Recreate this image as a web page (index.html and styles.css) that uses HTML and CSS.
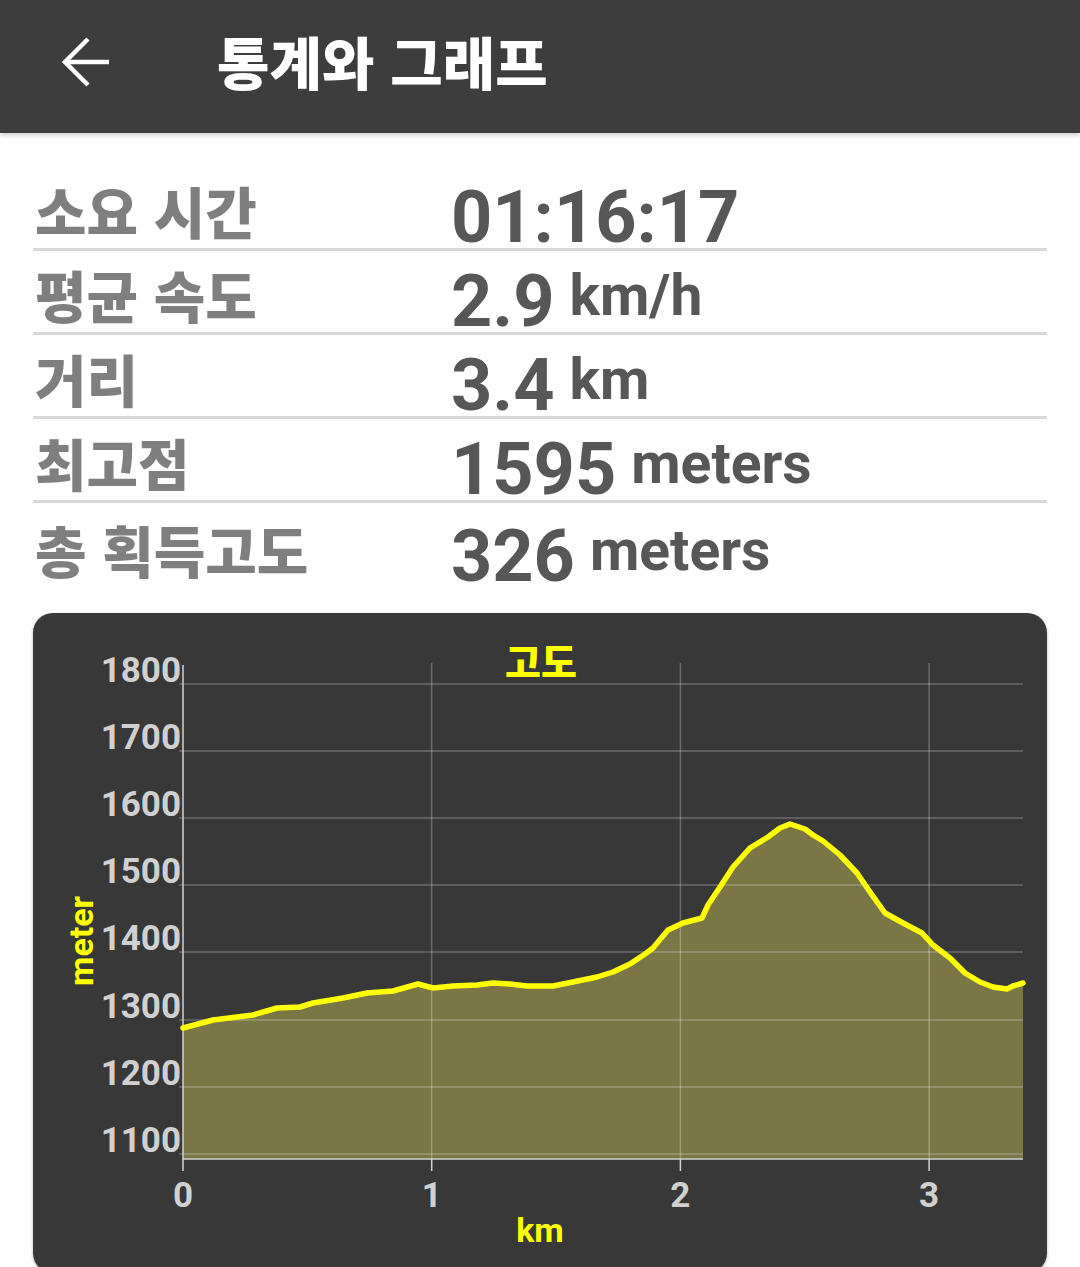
FILE: index.html
```html
<!DOCTYPE html>
<html lang="ko">
<head>
<meta charset="utf-8">
<title>통계와 그래프</title>
<link rel="stylesheet" href="styles.css">
</head>
<body>
<header class="appbar">
  <svg class="back" width="60" height="60" viewBox="0 0 60 60" aria-hidden="true">
    <polyline points="29,8 6,31 29,54" fill="none" stroke="#fff" stroke-width="4.5"/>
    <line x1="7" y1="31" x2="50" y2="31" stroke="#fff" stroke-width="4.5"/>
  </svg>
  <h1 class="title">통계와 그래프</h1>
</header>

<section class="stats">
  <div class="row">
    <div class="label">소요 시간</div>
    <div class="num">01:16:17</div>
  </div>
  <div class="row">
    <div class="label">평균 속도</div>
    <div class="num">2.9</div>
    <div class="unit">km/h</div>
  </div>
  <div class="row">
    <div class="label">거리</div>
    <div class="num">3.4</div>
    <div class="unit">km</div>
  </div>
  <div class="row">
    <div class="label">최고점</div>
    <div class="num">1595</div>
    <div class="unit">meters</div>
  </div>
  <div class="row last">
    <div class="label">총 획득고도</div>
    <div class="num">326</div>
    <div class="unit">meters</div>
  </div>
</section>

<section class="card">
  <svg class="chart" width="1014" height="660" viewBox="33 613 1014 660">
    <polygon class="area" points="183,1028 213,1020 253,1015 277,1008 300,1007 313,1003 343,998 367,993 393,991 418,984 433,988 453,986 477,985 493,983 510,984 527,986 553,986 573,982 597,977 613,972 630,964 645,954 653,948 668,930 683,923 702,918 708,905 720,887 733,867 750,848 768,837 780,828 790,824 805,829 813,835 823,841 840,855 857,873 870,892 885,913 903,923 922,933 933,945 950,958 965,973 980,982 993,987 1007,989 1013,986 1023,983 1023,1159 183,1159"/>
    <g class="grid">
      <line x1="179" y1="684" x2="1023" y2="684"/>
      <line x1="179" y1="751" x2="1023" y2="751"/>
      <line x1="179" y1="818" x2="1023" y2="818"/>
      <line x1="179" y1="885" x2="1023" y2="885"/>
      <line x1="179" y1="952" x2="1023" y2="952"/>
      <line x1="179" y1="1020" x2="1023" y2="1020"/>
      <line x1="179" y1="1087" x2="1023" y2="1087"/>
      <line x1="179" y1="1154" x2="1023" y2="1154"/>
      <line x1="431.7" y1="663" x2="431.7" y2="1159"/>
      <line x1="680.4" y1="663" x2="680.4" y2="1159"/>
      <line x1="929.1" y1="663" x2="929.1" y2="1159"/>
    </g>
    <g class="axis">
      <line x1="183" y1="665" x2="183" y2="1171"/>
      <line x1="183" y1="1159" x2="1023" y2="1159"/>
      <line x1="431.7" y1="1159" x2="431.7" y2="1171"/>
      <line x1="680.4" y1="1159" x2="680.4" y2="1171"/>
      <line x1="929.1" y1="1159" x2="929.1" y2="1171"/>
    </g>
    <polyline class="curve" points="183,1028 213,1020 253,1015 277,1008 300,1007 313,1003 343,998 367,993 393,991 418,984 433,988 453,986 477,985 493,983 510,984 527,986 553,986 573,982 597,977 613,972 630,964 645,954 653,948 668,930 683,923 702,918 708,905 720,887 733,867 750,848 768,837 780,828 790,824 805,829 813,835 823,841 840,855 857,873 870,892 885,913 903,923 922,933 933,945 950,958 965,973 980,982 993,987 1007,989 1013,986 1023,983"/>
    <g class="ylab">
      <text x="181" y="682">1800</text>
      <text x="181" y="749">1700</text>
      <text x="181" y="816">1600</text>
      <text x="181" y="883">1500</text>
      <text x="181" y="950">1400</text>
      <text x="181" y="1018">1300</text>
      <text x="181" y="1085">1200</text>
      <text x="181" y="1152">1100</text>
    </g>
    <g class="xlab">
      <text x="183" y="1207">0</text>
      <text x="431.7" y="1207">1</text>
      <text x="680.4" y="1207">2</text>
      <text x="929.1" y="1207">3</text>
    </g>
    <text class="ctitle" x="541" y="677">고도</text>
    <text class="xname" x="540" y="1242">km</text>
    <text class="yname" transform="translate(93,941) rotate(-90)">meter</text>
  </svg>
</section>
</body>
</html>
```

FILE: styles.css
```css
html, body {
  margin: 0;
  padding: 0;
  background: #ffffff;
}
body {
  width: 1080px;
  height: 1267px;
  overflow: hidden;
  font-family: "Roboto", "Noto Sans CJK KR", sans-serif;
}

.appbar {
  height: 133px;
  background: #3d3d3d;
  display: flex;
  align-items: center;
  box-shadow: 0 2px 5px rgba(0, 0, 0, 0.22);
  position: relative;
  z-index: 1;
}
.back {
  margin-left: 59px;
  margin-top: -12px;
  flex: none;
}
.title {
  margin: -12px 0 0 98px;
  color: #ffffff;
  font-family: "Noto Sans CJK KR", sans-serif;
  font-weight: 900;
  font-size: 57px;
  line-height: 1;
}

.stats {
  margin: 34px 33px 0 33px;
}
.row {
  height: 81px;
  display: flex;
  align-items: flex-end;
  border-bottom: 3px solid #d8d8d8;
}
.row.last {
  border-bottom: none;
  height: 84px;
}
.label {
  width: 416px;
  padding-left: 2px;
  flex: none;
  font-family: "Noto Sans CJK KR", sans-serif;
  font-weight: 900;
  font-size: 56px;
  line-height: 77px;
  color: #7f7f7f;
}
.num {
  font-family: "Roboto", sans-serif;
  font-weight: 700;
  font-size: 72px;
  line-height: 60px;
  color: #575757;
}
.unit {
  margin-left: 15px;
  font-family: "Roboto", sans-serif;
  font-weight: 700;
  font-size: 57px;
  line-height: 73px;
  color: #575757;
}

.card {
  margin: 26px 33px 0 33px;
  height: 660px;
  background: #383838;
  border-radius: 20px;
  box-shadow: 0 1px 3px rgba(0, 0, 0, 0.3);
  overflow: hidden;
}
.chart {
  display: block;
}
.area {
  fill: #7a7646;
}
.grid line {
  stroke: rgba(255, 255, 255, 0.26);
  stroke-width: 1.5;
}
.axis line {
  stroke: #d2d2d2;
  stroke-width: 1.5;
}
.curve {
  fill: none;
  stroke: #ffff00;
  stroke-width: 5.5;
  stroke-linejoin: round;
  stroke-linecap: round;
}
.ylab text {
  font-family: "Roboto", sans-serif;
  font-weight: 700;
  font-size: 35px;
  fill: #d0d0d0;
  text-anchor: end;
}
.xlab text {
  font-family: "Roboto", sans-serif;
  font-weight: 700;
  font-size: 35px;
  fill: #d0d0d0;
  text-anchor: middle;
}
.ctitle {
  font-family: "Noto Sans CJK KR", sans-serif;
  font-weight: 900;
  font-size: 39px;
  fill: #ffff00;
  text-anchor: middle;
}
.xname, .yname {
  font-family: "Roboto", sans-serif;
  font-weight: 700;
  font-size: 34px;
  fill: #ffff00;
  text-anchor: middle;
}
```
